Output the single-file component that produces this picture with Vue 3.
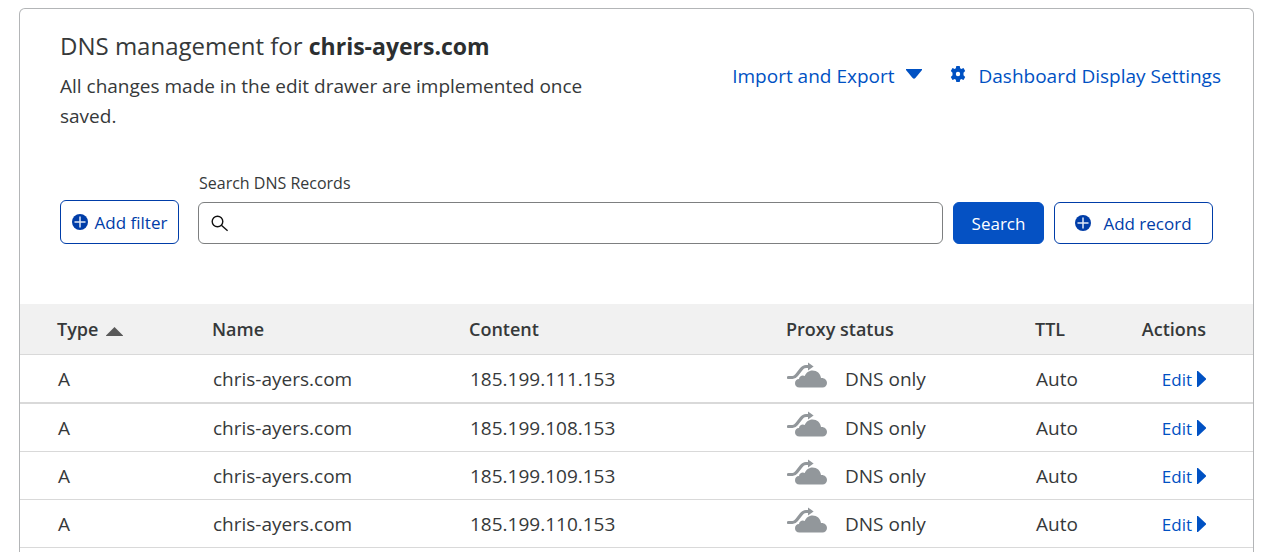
<script setup>
import { ref } from 'vue'

const query = ref('')
const records = [
  { type: 'A', name: 'chris-ayers.com', content: '185.199.111.153', status: 'DNS only', ttl: 'Auto' },
  { type: 'A', name: 'chris-ayers.com', content: '185.199.108.153', status: 'DNS only', ttl: 'Auto' },
  { type: 'A', name: 'chris-ayers.com', content: '185.199.109.153', status: 'DNS only', ttl: 'Auto' },
  { type: 'A', name: 'chris-ayers.com', content: '185.199.110.153', status: 'DNS only', ttl: 'Auto' },
]
</script>

<template>
  <main class="page">
    <section class="card">
      <header class="head">
        <div class="intro">
          <h1>DNS management for <strong>chris-ayers.com</strong></h1>
          <p>All changes made in the edit drawer are implemented once saved.</p>
        </div>
        <nav class="links">
          <button type="button" class="link">
            Import and Export
            <svg class="caret" width="16" height="10" viewBox="0 0 16 10"><path d="M0 0h16v1L9.400 9q-1.400 1.400-2.800 0L0 1z" /></svg>
          </button>
          <a href="#settings" class="link settings">
            <svg width="16" height="16" viewBox="0 0 16 16">
              <path fill-rule="evenodd" d="M6.300 0h3.400l.5 2.300 1 .6 2.300-.8 1.700 2.900-1.700 1.700v2.600l1.700 1.700-1.700 2.900-2.300-.8-1 .6-.5 2.300H6.300l-.5-2.300-1-.6-2.300.8L.8 11l1.700-1.700V6.700L.8 5l1.700-2.900 2.300.8 1-.6zM8 5.800a2.200 2.200 0 1 0 0 4.400 2.200 2.200 0 0 0 0-4.400z" />
            </svg>
            Dashboard Display Settings
          </a>
        </nav>
      </header>

      <form class="toolbar" @submit.prevent>
        <button type="button" class="btn outline filter">
          <svg width="16" height="16" viewBox="0 0 16 16"><circle cx="8" cy="8" r="8" /><path class="plus" d="M8 2.500v11M2.500 8h11" /></svg>
          Add filter
        </button>
        <div class="field">
          <label for="dns-search">Search DNS Records</label>
          <div class="box">
            <svg width="18" height="17" viewBox="0 0 18 17"><circle cx="6.500" cy="6.500" r="5.300" /><path d="M10.400 10.200l6.200 5.600" /></svg>
            <input id="dns-search" v-model="query" type="text" />
          </div>
        </div>
        <button type="submit" class="btn solid">Search</button>
        <button type="button" class="btn outline record">
          <svg width="16" height="16" viewBox="0 0 16 16"><circle cx="8" cy="8" r="8" /><path class="plus" d="M8 2.500v11M2.500 8h11" /></svg>
          Add record
        </button>
      </form>

      <table>
        <colgroup>
          <col class="c-type" /><col class="c-name" /><col /><col class="c-proxy" /><col class="c-ttl" /><col class="c-act" />
        </colgroup>
        <thead>
          <tr>
            <th scope="col">Type <svg class="sort" width="17" height="9" viewBox="0 0 17 9"><path d="M8.500 0L17 8.500V9H0v-.5z" /></svg></th>
            <th scope="col">Name</th>
            <th scope="col">Content</th>
            <th scope="col">Proxy status</th>
            <th scope="col">TTL</th>
            <th scope="col" class="act">Actions</th>
          </tr>
        </thead>
        <tbody>
          <tr v-for="r in records" :key="r.content">
            <td>{{ r.type }}</td>
            <td>{{ r.name }}</td>
            <td>{{ r.content }}</td>
            <td>
              <div class="proxy">
                <svg width="41" height="26" viewBox="0 0 41 26">
                  <path class="arrow" d="M1.500 15.500h4c2 0 3-1 4.200-2.500l4.300-5.500c1.500-2 2.600-3 5-3h4" />
                  <path d="M21 .4l5.600 4.100-5.600 4.100z" />
                  <path d="M12.500 25.500C9.500 25.500 8 23.500 8 21.200c0-2.500 1.600-4.200 4-4.200.2-3 3.600-4.500 5.800-3 1.300-3.200 4-5.500 7.700-5.500 4.500 0 8 3 8.500 7.500 3.500-.3 6 2 6 5 0 2.600-2 4.500-4.500 4.500z" />
                </svg>
                {{ r.status }}
              </div>
            </td>
            <td>{{ r.ttl }}</td>
            <td class="act">
              <button type="button" class="edit">Edit<svg width="9" height="16" viewBox="0 0 9 16"><path d="M0 0h1l8 7.500v1L1 16H0z" /></svg></button>
            </td>
          </tr>
        </tbody>
      </table>
    </section>
  </main>
</template>

<style>
body {
  margin: 0;
  background: #fff;
}
</style>

<style scoped>
* {
  box-sizing: border-box;
}
.page {
  padding: 8px 23px 0 19px;
  font-family: "Segoe UI", "Open Sans", "Noto Sans", sans-serif;
  font-size: 19px;
  color: #36393a;
}
button, input {
  font: inherit;
}
svg {
  flex: none;
  fill: currentColor;
}
.card {
  border: 1px solid #b3b5b7;
  border-bottom: 0;
  border-radius: 6px 6px 0 0;
  padding-bottom: 4px;
}
.head {
  display: flex;
  justify-content: space-between;
  align-items: flex-start;
  padding: 20px 32px 0 40px;
}
.intro {
  width: 540px;
}
h1 {
  margin: 0;
  font-size: 24px;
  line-height: 34px;
  font-weight: 400;
}
h1 strong {
  font-size: 23px;
  font-weight: 700;
  color: #2c2f30;
}
p {
  margin: 8px 0 0;
  line-height: 30px;
}
.links {
  display: flex;
  gap: 28px;
  padding-top: 32px;
}
.link {
  display: flex;
  align-items: center;
  gap: 12px;
  padding: 0;
  border: 0;
  background: none;
  color: #0051c3;
  line-height: 30px;
  text-decoration: none;
  white-space: nowrap;
}
.link svg {
  margin-bottom: 4px;
}
.toolbar {
  display: flex;
  align-items: flex-end;
  gap: 10px;
  padding: 40px 40px 60px;
}
.btn {
  display: flex;
  align-items: center;
  justify-content: center;
  height: 42px;
  padding: 0;
  border: 1px solid #003da8;
  border-radius: 6px;
  font-size: 17px;
  white-space: nowrap;
}
.outline {
  background: #fff;
  color: #003da8;
}
.solid {
  width: 91px;
  background: #0551c3;
  border-color: #0551c3;
  color: #fff;
}
.filter {
  width: 119px;
  height: 44px;
  gap: 7px;
  margin-right: 9px;
}
.record {
  width: 159px;
  gap: 12px;
}
.plus {
  stroke: #dfe7f5;
  stroke-width: 1.500;
}
.field {
  flex: 1;
}
.field label {
  display: block;
  padding-left: 1px;
  font-size: 16px;
  line-height: 24px;
  margin-bottom: 7px;
}
.box {
  display: flex;
  align-items: center;
  gap: 8px;
  height: 42px;
  padding: 0 12px;
  border: 1px solid #7d7f80;
  border-radius: 6px;
}
.box svg {
  fill: none;
  stroke: #111;
  stroke-width: 1.400;
}
.box input {
  flex: 1;
  min-width: 0;
  border: 0;
  outline: 0;
  background: none;
}
table {
  width: 100%;
  table-layout: fixed;
  border-collapse: separate;
  border-spacing: 0;
}
.c-type { width: 155px; }
.c-name { width: 257px; }
.c-proxy { width: 249px; }
.c-ttl { width: 100px; }
.c-act { width: 155px; }
th, td {
  padding: 0 0 0 37px;
  text-align: left;
  white-space: nowrap;
  border-bottom: 1px solid #d9d9d9;
}
th {
  height: 51px;
  background: #f1f1f1;
  font-size: 18px;
  font-weight: 600;
}
td {
  height: 48px;
  padding-left: 38px;
}
tbody tr:first-child td {
  height: 49px;
  border-bottom-width: 2px;
}
.sort {
  margin-left: 3px;
  fill: #595959;
}
.proxy {
  display: flex;
  align-items: center;
  gap: 17px;
}
.proxy svg {
  fill: #92979b;
  margin-bottom: 8px;
}
.proxy .arrow {
  fill: none;
  stroke: #92979b;
  stroke-width: 3.200;
  stroke-linecap: round;
}
th.act, td.act {
  padding: 0 47px 0 0;
  text-align: right;
}
.edit {
  display: inline-flex;
  align-items: center;
  gap: 5px;
  padding: 0;
  border: 0;
  background: none;
  color: #0051c3;
  font-size: 17px;
}
</style>
